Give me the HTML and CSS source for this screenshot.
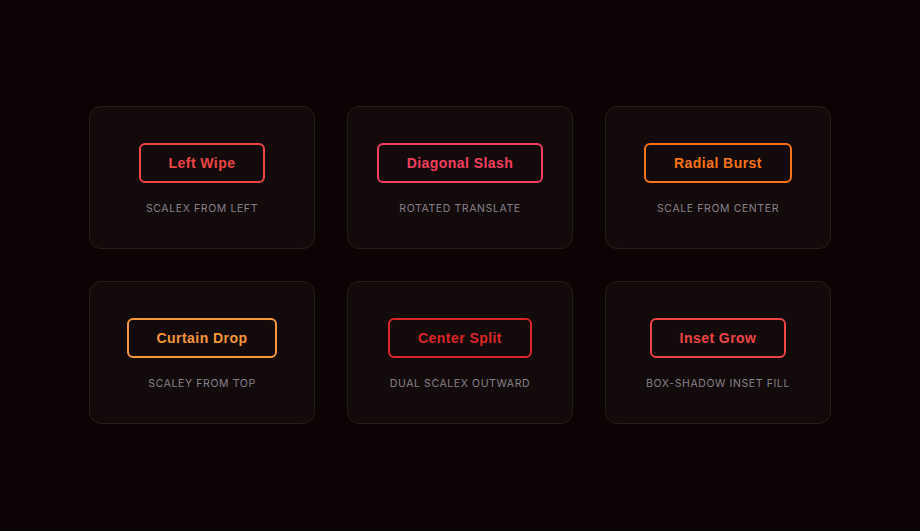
FILE: index.html
```html
<!DOCTYPE html>
<html lang="en">
<head>
  <meta charset="UTF-8" />
  <meta name="viewport" content="width=device-width, initial-scale=1.0"/>
  <title>Button Hover Effects</title>
  <link rel="stylesheet" href="styles.css">
</head>
<body>
  <div class="grid">
    <div class="card">
      <button class="btn btn-left">Left Wipe</button>
      <p class="label">scaleX from left</p>
    </div>
    <div class="card">
      <button class="btn btn-diagonal">Diagonal Slash</button>
      <p class="label">rotated translate</p>
    </div>
    <div class="card">
      <button class="btn btn-radial">Radial Burst</button>
      <p class="label">scale from center</p>
    </div>
    <div class="card">
      <button class="btn btn-curtain">Curtain Drop</button>
      <p class="label">scaleY from top</p>
    </div>
    <div class="card">
      <button class="btn btn-split">Center Split</button>
      <p class="label">dual scaleX outward</p>
    </div>
    <div class="card">
      <button class="btn btn-inset">Inset Grow</button>
      <p class="label">box-shadow inset fill</p>
    </div>
  </div>
</body>
</html>
```

FILE: styles.css
```css
body {
  margin: 0;
  height: 100vh;
  display: flex;
  justify-content: center;
  align-items: flex-start;
  background: #0c0404;
  font-family: Inter, 'Liberation Sans', sans-serif;
}
.grid {
  margin-top: 106px;
  display: grid;
  grid-template-columns: repeat(3, 226px);
  gap: 32px;
}
.card {
  height: 143px;
  box-sizing: border-box;
  padding-top: 3px;
  background: #130b0b;
  border: 1px solid #261c1c;
  border-radius: 12px;
  display: flex;
  flex-direction: column;
  align-items: center;
  justify-content: center;
  gap: 20px;
}
.btn {
  font-family: 'Liberation Sans', Arial, sans-serif;
  font-size: 14px;
  font-weight: 700;
  letter-spacing: 0.45px;
  line-height: 16px;
  padding: 10px 28px;
  background: transparent;
  border: 2px solid currentColor;
  border-radius: 6px;
  cursor: pointer;
}
.label {
  margin: 0;
  font-size: 10.5px;
  line-height: 12px;
  letter-spacing: 0.6px;
  text-transform: uppercase;
  color: #86818b;
}
.btn-left { color: #ef4444; }
.btn-diagonal { color: #f43f5e; }
.btn-radial { color: #f97316; }
.btn-curtain { color: #f7963a; }
.btn-split { color: #dc2626; }
.btn-inset { color: #ef4444; }
```
